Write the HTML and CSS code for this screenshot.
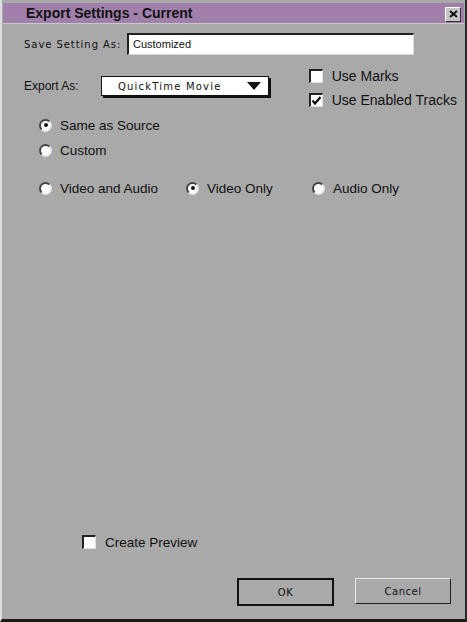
FILE: index.html
```html
<!DOCTYPE html>
<html>

<head>
    <title>Export Settings - Current</title>
    <link rel="stylesheet" href="styles.css">
</head>

<body>
    <div class="window">
        <div class="titlebar">
            <span class="title">Export Settings - Current</span>
            <span class="close">
                <svg width="9" height="8" viewBox="0 0 9 8"><path d="M1 1 L8 7 M8 1 L1 7" stroke="#111" stroke-width="2"/></svg>
            </span>
        </div>

        <div class="content">
            <div class="save-row">
                <label class="wide-label">Save Setting As:</label>
                <div class="textbox">Customized</div>
            </div>

            <div class="export-row">
                <div class="export-left">
                    <label class="export-label">Export As:</label>
                    <div class="popup">
                        <span>QuickTime Movie</span>
                        <span class="arrow"></span>
                    </div>
                </div>
                <div class="checks">
                    <div class="check-item"><span class="checkbox"></span>Use Marks</div>
                    <div class="check-item">
                        <span class="checkbox">
                            <svg width="11" height="11" viewBox="0 0 11 11"><path d="M1.5 5.5 L4 8.5 L9.5 2" fill="none" stroke="#111" stroke-width="2.2"/></svg>
                        </span>Use Enabled Tracks
                    </div>
                </div>
            </div>

            <div class="radio-group">
                <div class="radio-item"><span class="radio on"></span>Same as Source</div>
                <div class="radio-item"><span class="radio"></span>Custom</div>
            </div>

            <div class="track-row">
                <div class="radio-item w-va"><span class="radio"></span>Video and Audio</div>
                <div class="radio-item w-vo"><span class="radio on"></span>Video Only</div>
                <div class="radio-item"><span class="radio"></span>Audio Only</div>
            </div>

            <div class="spacer"></div>

            <div class="preview-row">
                <div class="check-item"><span class="checkbox"></span>Create Preview</div>
            </div>

            <div class="button-row">
                <button class="btn btn-default">OK</button>
                <button class="btn">Cancel</button>
            </div>
        </div>
    </div>
</body>

</html>
```

FILE: styles.css
```css
body {
    margin: 0;
    padding: 0;
    background: #a9a9a9;
    font-family: 'Liberation Sans', Arial, sans-serif;
    color: #111111;
}

.window {
    width: 467px;
    height: 622px;
    box-sizing: border-box;
    background: #a9a9a9;
    padding: 3px 1px 0 1px;
    border-left: 2px solid #dcdcdc;
    border-right: 2px solid #2a2a2a;
    border-bottom: 3px solid #1a1a1a;
    display: flex;
    flex-direction: column;
}

.titlebar {
    height: 20px;
    background: #a17fab;
    display: flex;
    align-items: center;
    justify-content: space-between;
    padding: 0 3px 0 23px;
    border-bottom: 1px solid #c8c8c8;
}

.title {
    font-weight: bold;
    font-size: 14px;
    color: #111111;
}

.close {
    width: 14px;
    height: 13px;
    background: #c6c6c6;
    border-top: 1px solid #ffffff;
    border-left: 1px solid #ffffff;
    border-right: 1px solid #333333;
    border-bottom: 1px solid #333333;
    display: flex;
    align-items: center;
    justify-content: center;
    margin-top: 2px;
}

.content {
    flex: 1;
    display: flex;
    flex-direction: column;
    padding: 9px 0 0 21px;
}

.save-row {
    display: flex;
    align-items: center;
    height: 22px;
}

.wide-label {
    font-family: 'DejaVu Sans', sans-serif;
    font-size: 10px;
    letter-spacing: 0.95px;
    width: 103px;
    white-space: nowrap;
}

.textbox {
    width: 280px;
    height: 19px;
    background: #ffffff;
    border-top: 2px solid #222222;
    border-left: 2px solid #222222;
    border-right: 1px solid #d8d8d8;
    border-bottom: 1px solid #d8d8d8;
    font-size: 11px;
    line-height: 19px;
    padding-left: 4px;
    box-sizing: content-box;
}

.export-row {
    display: flex;
    justify-content: space-between;
    margin-top: 13px;
    padding-right: 7px;
}

.export-left {
    display: flex;
    align-items: center;
    height: 22px;
    margin-top: 7px;
}

.export-label {
    font-size: 12px;
    width: 77px;
}

.popup {
    height: 18px;
    background: #ffffff;
    border: 1px solid #111111;
    box-shadow: 2px 2px 0 #111111;
    display: flex;
    align-items: center;
    justify-content: space-between;
    padding: 0 7px 0 16px;
    box-sizing: content-box;
    width: 143px;
    font-family: 'DejaVu Sans', sans-serif;
    font-size: 10px;
    letter-spacing: 1.2px;
}

.arrow {
    width: 0;
    height: 0;
    border-left: 7px solid transparent;
    border-right: 7px solid transparent;
    border-top: 8px solid #111111;
}

.checks {
    display: flex;
    flex-direction: column;
    gap: 10px;
    margin-top: 1px;
}

.check-item {
    display: flex;
    align-items: center;
    font-size: 14px;
    height: 14px;
}

.checkbox {
    width: 11px;
    height: 11px;
    background: #ffffff;
    border-top: 2px solid #222222;
    border-left: 2px solid #222222;
    border-right: 1px solid #e0e0e0;
    border-bottom: 1px solid #e0e0e0;
    margin-right: 9px;
    display: flex;
}

.radio-group {
    display: flex;
    flex-direction: column;
    gap: 11px;
    margin-top: 11px;
    padding-left: 15px;
}

.radio-item {
    display: flex;
    align-items: center;
    font-size: 13.5px;
    height: 14px;
}

.radio {
    width: 9px;
    height: 9px;
    border-radius: 50%;
    background: #ffffff;
    border: 2px solid #e8e8e8;
    border-top-color: #444444;
    border-left-color: #444444;
    margin-right: 8px;
    position: relative;
}

.radio.on::after {
    content: "";
    position: absolute;
    left: 2.5px;
    top: 2.5px;
    width: 4px;
    height: 4px;
    border-radius: 50%;
    background: #111111;
}

.track-row {
    display: flex;
    margin-top: 24px;
    padding-left: 15px;
}

.w-va {
    width: 147px;
}

.w-vo {
    width: 126px;
}

.spacer {
    flex: 1;
}

.preview-row {
    padding-left: 58px;
    margin-bottom: 29px;
}

.preview-row .check-item {
    font-size: 13.5px;
}

.button-row {
    display: flex;
    justify-content: flex-end;
    gap: 21px;
    padding-right: 13px;
    margin-bottom: 13px;
}

.btn {
    width: 96px;
    height: 26px;
    background: #a9a9a9;
    border-top: 1px solid #e6e6e6;
    border-left: 1px solid #e6e6e6;
    border-right: 1px solid #222222;
    border-bottom: 1px solid #222222;
    font-family: 'DejaVu Sans', sans-serif;
    font-size: 10px;
    letter-spacing: 0.5px;
    color: #111111;
    padding: 0;
}

.btn-default {
    border: 2px solid #111111;
    width: 97px;
    height: 28px;
}
```
